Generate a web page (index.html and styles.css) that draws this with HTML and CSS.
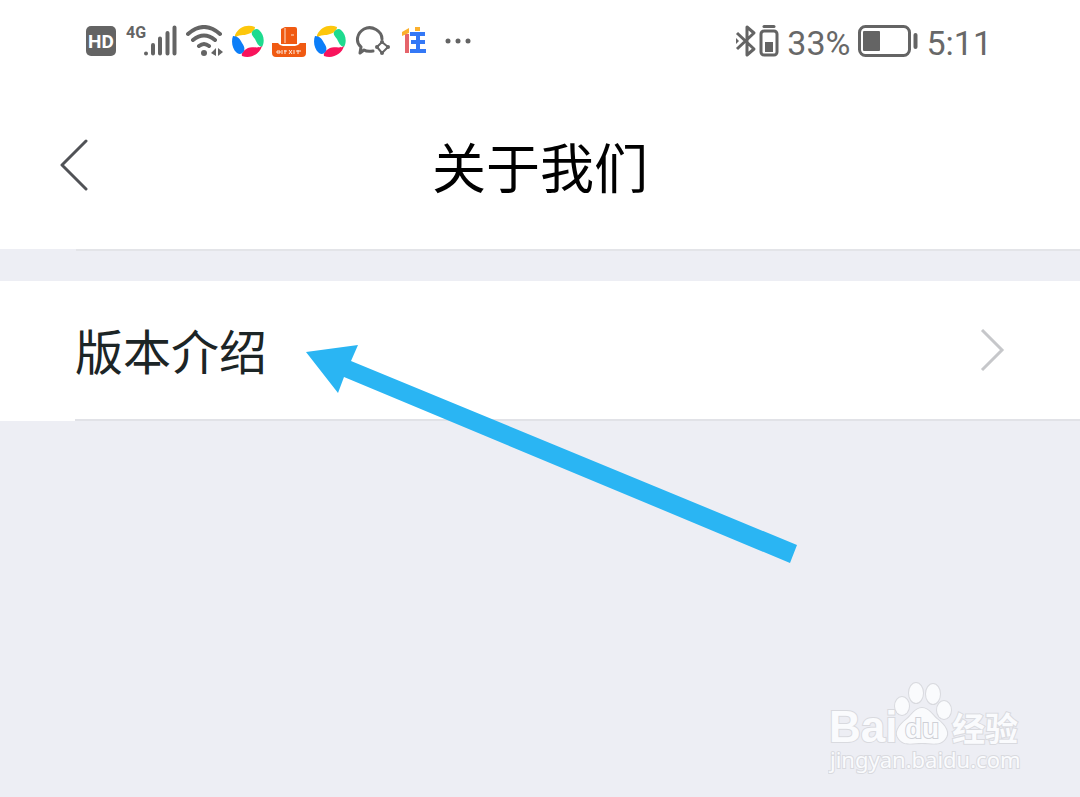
FILE: index.html
```html
<!DOCTYPE html>
<html lang="zh-CN">
<head>
<meta charset="utf-8">
<meta name="viewport" content="width=device-width, initial-scale=1">
<title>关于我们</title>
<link rel="stylesheet" href="styles.css">
</head>
<body>
<svg class="defs" width="0" height="0" aria-hidden="true">
  <symbol id="swirl" viewBox="0 0 32 32">
    <path fill="#fdc70c" d="M3 10C7 1 16-1 23 2C23 5 20 8 16 9C12 11 6 9 3 13Z"/>
    <path fill="#1edb8f" d="M20 7C22 4 25 3 27 5C32 9 33 17 30 22C26 21 25 18 23 14C21 11 19 10 20 7Z"/>
    <path fill="#f8145c" d="M30 21C28 29 19 34 10 31C9 28 12 25 16 23C20 21 26 24 30 21Z"/>
    <path fill="#0c7ef8" d="M1 11C6 11 8 14 10 18C12 21 13 23 12 26C10 29 8 30 5 28C0 24-1 16 1 11Z"/>
  </symbol>
</svg>
<div class="screen">
  <div class="status">
    <div class="status-group">
      <svg width="32" height="32" viewBox="0 0 32 32" role="img" aria-label="HD">
        <rect y="1" width="30" height="30" rx="5" fill="#646464"/>
        <text class="hd" x="15" y="23" text-anchor="middle">HD</text>
      </svg>
      <svg width="52" height="36" viewBox="0 -2 52 36" role="img" aria-label="4G">
        <text class="net" x="0" y="13">4G</text>
        <path d="M20 28.500v.1M27 20v8.500M34 13.500v15M41.500 8v20.500M48.500 2.500v26" stroke="#646464" stroke-width="4" stroke-linecap="round"/>
      </svg>
      <svg width="38" height="32" viewBox="0 0 38 32" fill="none" stroke="#646464" stroke-width="4" stroke-linecap="round" aria-hidden="true">
        <path d="M2 9Q18-5 34 9M7 15Q18 6 29 15M13 21Q18 17 23 21"/>
        <circle cx="18" cy="28" r="3" fill="#646464" stroke="none"/>
        <path d="M30 23V31L25 28ZM32 23V31L37 27Z" fill="#646464" stroke="none"/>
      </svg>
      <svg width="32" height="32" aria-hidden="true"><use href="#swirl"/></svg>
      <svg width="34" height="36" viewBox="0 0 34 36" aria-hidden="true">
        <path fill="#f05a12" d="M9 6L13 4H23Q25 4 25 6V21H9Z"/>
        <path d="M13 5V20M19 12H22" stroke="#ffe2cd" stroke-width="1"/>
        <path fill="#f05a12" d="M0 20H6Q8 23 11 23H23Q26 23 28 20H34V30Q34 34 30 34H4Q0 34 0 30Z"/>
        <path d="M5 28h3v2h-3zM10 27v4m2-3h3m-2-1v4M17 27l3 4m0-4l-3 4M22 27v4m2-3h5m-3-1v4" fill="none" stroke="#ffe9dc" stroke-width="1"/>
      </svg>
      <svg width="32" height="32" aria-hidden="true"><use href="#swirl"/></svg>
      <svg width="38" height="32" viewBox="0 0 38 32" fill="none" stroke="#646464" stroke-width="3" stroke-linejoin="round" aria-hidden="true">
        <path d="M19 26Q13 27 10 25L6 28L7 22C1 17 3 8 10 4C18 0 28 6 28 14" stroke-linecap="round"/>
        <path d="M28 17L34 22L28 28L23 22Z" stroke-width="2"/>
        <g fill="#646464" stroke="none"><circle cx="28" cy="17" r="2"/><circle cx="34" cy="22" r="2"/><circle cx="28" cy="28" r="2"/><circle cx="23" cy="22" r="2"/></g>
      </svg>
      <svg width="28" height="32" viewBox="0 0 28 32" aria-hidden="true">
        <path fill="#e5646b" d="M5 9H9V28H5Z"/>
        <path fill="#fbb02d" d="M2 7L9 3V8L2 11ZM15 2H20V6H15Z"/>
        <path d="M10 9H25M11 17H25M10 26H26M18 8V26" stroke="#3478f6" stroke-width="4"/>
      </svg>
      <svg width="36" height="32" viewBox="0 0 36 32" fill="#646464" aria-hidden="true"><circle cx="12" cy="16" r="2.500"/><circle cx="22" cy="16" r="2.500"/><circle cx="32" cy="16" r="2.500"/></svg>
    </div>
    <div class="status-group">
      <svg width="44" height="34" viewBox="0 0 44 34" fill="none" stroke="#646464" stroke-width="3" stroke-linejoin="round" aria-hidden="true">
        <path d="M2 9L19 25L12 31V3L19 9L2 25"/>
        <path d="M1 14L4 17L1 20Z" fill="#646464" stroke="none"/>
        <rect x="26" y="7" width="16" height="24" rx="3"/>
        <path d="M29 2.500H39" stroke-linecap="round"/><path d="M30 18H38V28H30Z" fill="#646464" stroke="none"/>
      </svg>
      <span class="status-text">33%</span>
      <svg width="60" height="32" viewBox="0 0 60 32" aria-hidden="true">
        <rect x="1.500" y="1.500" width="50" height="29" rx="6" fill="none" stroke="#646464" stroke-width="3"/>
        <rect x="5" y="6" width="17" height="20" rx="1" fill="#646464"/>
        <path d="M57.500 10V22" stroke="#646464" stroke-width="4" stroke-linecap="round"/>
      </svg>
      <time class="status-text">5:11</time>
    </div>
  </div>
  <header class="nav">
    <button class="back" type="button" aria-label="返回">
      <svg width="30" height="54" viewBox="0 0 30 54" fill="none" stroke="#505256" stroke-width="3" stroke-linecap="round" stroke-linejoin="round"><path d="M28 2L4 26L28 50"/></svg>
    </button>
    <h1 class="title">关于我们</h1>
  </header>
  <main class="list">
    <a class="row" href="#version">
      <span class="label">版本介绍</span>
      <svg width="26" height="44" viewBox="0 0 26 44" fill="none" stroke="#c6c7ca" stroke-width="3"><path d="M3 1L23 21L3 41"/></svg>
    </a>
  </main>
  <svg class="arrow" width="492" height="220" viewBox="0 0 492 220" aria-hidden="true"><path fill="#2ab5f3" d="M0 8L52 1L45 17L491 201L484 219L38 33L32 49Z"/></svg>
  <div class="watermark">
    <svg width="200" height="100" viewBox="0 0 200 100">
      <g fill="#fafbfd" stroke="#d9dadf" stroke-width="2" paint-order="stroke">
        <text class="brand" x="1" y="66">Bai</text>
        <ellipse cx="74" cy="30" rx="7" ry="9"/><ellipse cx="88" cy="17" rx="7" ry="10"/><ellipse cx="105" cy="18" rx="7" ry="10"/><ellipse cx="116" cy="34" rx="7" ry="9"/>
        <path d="M94 32C101 32 104 39 109 43C118 50 122 57 117 63C112 70 103 67 94 67C85 67 76 70 71 63C66 57 70 50 79 43C84 39 87 32 94 32Z"/>
        <text class="du" x="94" y="62" text-anchor="middle">du</text>
        <text class="brand-cn" x="124" y="65">经验</text>
        <text class="site" x="2" y="92">jingyan.baidu.com</text>
      </g>
    </svg>
  </div>
</div>
</body>
</html>
```
FILE: styles.css
```css
* {
  box-sizing: border-box;
}

body {
  margin: 0;
  background: #edeef4;
  font-family: "Noto Sans CJK SC", sans-serif;
}

svg {
  display: block;
  flex: none;
}

.defs {
  position: absolute;
}

.screen {
  position: relative;
  min-height: 100vh;
}

.status {
  display: flex;
  justify-content: space-between;
  align-items: center;
  height: 82px;
  padding: 0 88px 0 86px;
  background: #fff;
}

.status-group {
  display: flex;
  align-items: center;
  gap: 8px;
}

.status-text {
  padding-top: 3px;
  font: 400 34px/40px Roboto, sans-serif;
  color: #686868;
}

.hd {
  font: 700 19px Roboto, sans-serif;
  fill: #fff;
}

.net {
  font: 700 16px Roboto, sans-serif;
  fill: #646464;
}

.nav {
  display: grid;
  grid-template-columns: 1fr auto 1fr;
  align-items: center;
  height: 167px;
  padding: 0 58px;
  background: #fff;
}

.back {
  justify-self: start;
  padding: 0;
  border: 0;
  background: none;
}

.title {
  margin: 0;
  font-size: 54px;
  line-height: 80px;
  font-weight: 400;
  color: #000;
}

.list {
  padding-top: 32px;
  background: linear-gradient(#e3e4e8, #e3e4e8) 76px 0 / 100% 2px no-repeat;
}

.row {
  display: flex;
  justify-content: space-between;
  align-items: center;
  height: 140px;
  padding: 0 75px;
  background: linear-gradient(#e1e2e7, #e1e2e7) 75px 100% / 100% 2px no-repeat #fff;
  color: #1c2526;
  font-size: 48px;
  line-height: 72px;
  text-decoration: none;
}

.label {
  padding-bottom: 4px;
}

.arrow {
  position: absolute;
  top: 344px;
  left: 306px;
}

.watermark {
  position: absolute;
  right: 52px;
  bottom: 21px;
}

.brand {
  font: 700 44px "Liberation Sans", sans-serif;
}

.brand-cn {
  font: 700 33px "Noto Sans CJK SC", sans-serif;
}

.du {
  font: 700 28px "Liberation Sans", sans-serif;
  stroke: #cfd0d6;
}

.site {
  font: 400 22px "Noto Sans", sans-serif;
}
```
